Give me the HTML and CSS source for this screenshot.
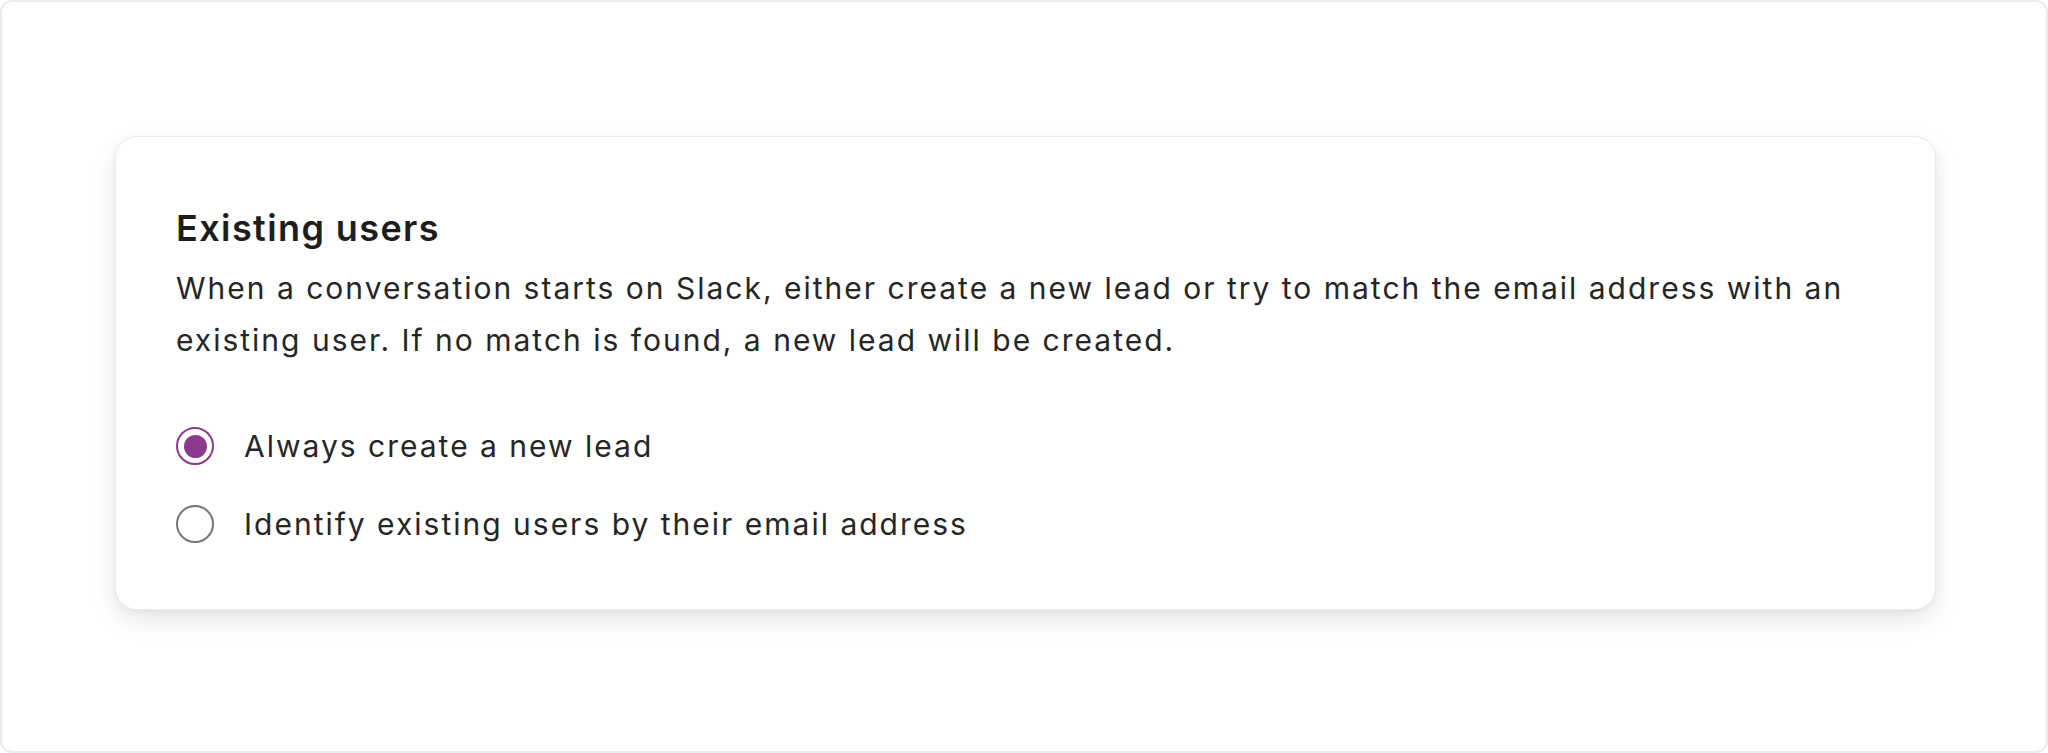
FILE: index.html
```html
<!DOCTYPE html>
<html lang="en">
<head>
    <meta charset="UTF-8">
    <meta name="viewport" content="width=device-width, initial-scale=1.0">
    <title>Existing users</title>
    <link rel="stylesheet" href="styles.css">
</head>
<body>

<div class="frame">
    <!-- Settings card -->
    <section class="card">
        <h2 class="card-title">Existing users</h2>
        <p class="card-text">When a conversation starts on Slack, either create a new lead or try to match the email address with an existing user. If no match is found, a new lead will be created.</p>

        <div class="options">
            <label class="option">
                <input type="radio" name="existing" value="new" checked>
                <span class="radio"></span>
                <span class="option-label">Always create a new lead</span>
            </label>
            <label class="option">
                <input type="radio" name="existing" value="email">
                <span class="radio"></span>
                <span class="option-label">Identify existing users by their email address</span>
            </label>
        </div>
    </section>
</div>

</body>
</html>
```

FILE: styles.css
```css
/* General */
* {
    box-sizing: border-box;
}

body {
    margin: 0;
    font-family: 'Inter', 'Noto Sans', sans-serif;
    background: #fff;
    color: #1f1f1f;
}

.frame {
    height: 753px;
    border: 2px solid #e9ebef;
    border-radius: 12px;
    padding: 134px 110px 0 113px;
}

/* Card */
.card {
    background: #fff;
    border: 1px solid #ebebeb;
    border-radius: 22px;
    box-shadow: 0 10px 24px rgba(0, 0, 0, 0.10), 0 2px 6px rgba(0, 0, 0, 0.04);
    padding: 71px 60px 59px 60px;
}

.card-title {
    margin: 0;
    font-size: 36px;
    line-height: 40px;
    font-weight: 600;
    letter-spacing: 1.4px;
    color: #1d1d1d;
}

.card-text {
    margin: 14px 0 0;
    font-size: 30px;
    line-height: 52px;
    letter-spacing: 2px;
    color: #262626;
}

/* Radio options */
.options {
    margin-top: 54px;
    display: flex;
    flex-direction: column;
    gap: 26px;
}

.option {
    display: flex;
    align-items: center;
    gap: 30px;
    height: 52px;
    cursor: pointer;
}

.option input {
    display: none;
}

.radio {
    width: 38px;
    height: 38px;
    border-radius: 50%;
    border: 2px solid #767676;
    display: flex;
    justify-content: center;
    align-items: center;
    flex-shrink: 0;
}

.option input:checked + .radio {
    border: 2.5px solid #8b3a8c;
}

.option input:checked + .radio::after {
    content: "";
    width: 23px;
    height: 23px;
    border-radius: 50%;
    background: #8b3a8c;
}

.option-label {
    font-size: 30px;
    line-height: 52px;
    letter-spacing: 2px;
    color: #262626;
}
```
